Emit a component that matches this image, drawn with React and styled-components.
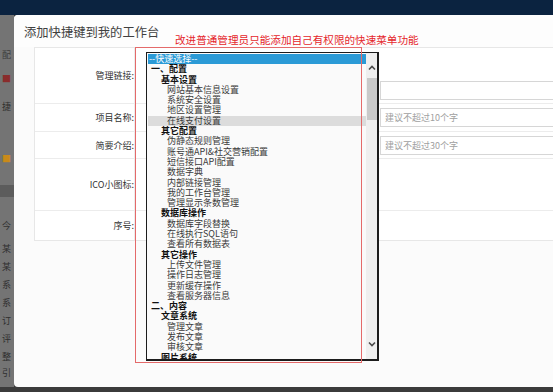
import React from 'react';
import styled, { createGlobalStyle } from 'styled-components';

const GlobalStyle = createGlobalStyle`
  html, body {
    margin: 0;
    padding: 0;
    overflow: hidden;
    background: #3a3a3a;
  }
`;

const FONT = '"Noto Sans CJK SC", "Noto Sans", "Liberation Sans", sans-serif';

const menu = [
  { text: '--快速选择--', level: 0, selected: true },
  { text: '一、配置', level: 0, bold: true },
  { text: '基本设置', level: 1, bold: true },
  { text: '网站基本信息设置', level: 2 },
  { text: '系统安全设置', level: 2 },
  { text: '地区设置管理', level: 2 },
  { text: '在线支付设置', level: 2, hover: true },
  { text: '其它配置', level: 1, bold: true },
  { text: '伪静态规则管理', level: 2 },
  { text: '账号通API&社交营销配置', level: 2 },
  { text: '短信接口API配置', level: 2 },
  { text: '数据字典', level: 2 },
  { text: '内部链接管理', level: 2 },
  { text: '我的工作台管理', level: 2 },
  { text: '管理显示条数管理', level: 2 },
  { text: '数据库操作', level: 1, bold: true },
  { text: '数据库字段替换', level: 2 },
  { text: '在线执行SQL语句', level: 2 },
  { text: '查看所有数据表', level: 2 },
  { text: '其它操作', level: 1, bold: true },
  { text: '上传文件管理', level: 2 },
  { text: '操作日志管理', level: 2 },
  { text: '更新缓存操作', level: 2 },
  { text: '查看服务器信息', level: 2 },
  { text: '二、内容', level: 0, bold: true },
  { text: '文章系统', level: 1, bold: true },
  { text: '管理文章', level: 2 },
  { text: '发布文章', level: 2 },
  { text: '审核文章', level: 2 },
  { text: '图片系统', level: 1, bold: true },
];

const rows = [
  { label: '管理链接:', height: 56, input: 'bottom' },
  { label: '项目名称:', height: 28, input: 'center', hint: '建议不超过10个字' },
  { label: '简要介绍:', height: 27, input: 'center', hint: '建议不超过30个字' },
  { label: 'ICO小图标:', height: 52 },
  { label: '序号:', height: 29 },
];

// faded page behind the dialog, only its right edge shows
const sideBits = [
  { text: '配', top: 34, color: '#3d3d3d' },
  { text: '■', top: 58, color: '#8a2c2c' },
  { text: '捷', top: 86, color: '#2d2d2d' },
  { text: '■', top: 138, color: '#c98a1a' },
  { text: '', top: 170, color: '#555', band: true },
  { text: '今', top: 205, color: '#333' },
  { text: '某', top: 228, color: '#2f2f2f' },
  { text: '某', top: 246, color: '#2f2f2f' },
  { text: '系', top: 264, color: '#2f2f2f' },
  { text: '系', top: 282, color: '#2f2f2f' },
  { text: '订', top: 300, color: '#2f2f2f' },
  { text: '评', top: 318, color: '#2f2f2f' },
  { text: '整', top: 336, color: '#2f2f2f' },
  { text: '引', top: 352, color: '#2f2f2f' },
];

const Page = styled.div`
  position: relative;
  width: 553px;
  height: 392px;
  display: grid;
  grid-template-columns: 14px 1fr;
  grid-template-rows: 15px 372px 5px;
  background: #3a3a3a;
  font-family: ${FONT};
  overflow: hidden;
`;

const TopBar = styled.div`
  grid-column: 1 / 3;
  background: #0b2340;
`;

const SideStrip = styled.div`
  position: relative;
  background: #747474;
  overflow: hidden;
`;

const SideBit = styled.span`
  position: absolute;
  left: 2px;
  top: ${(p) => p.$top}px;
  font-size: 9px;
  line-height: 12px;
  white-space: nowrap;
  color: ${(p) => p.$color};
  ${(p) => p.$band && `left: 0; width: 14px; height: 12px; background: #5c5c5c;`}
`;

const BottomBar = styled.div`
  grid-column: 1 / 3;
  background: #3b3b3b;
`;

const Modal = styled.div`
  background: #fbfbfb;
  border-top-left-radius: 4px;
  border-bottom-left-radius: 4px;
  display: flex;
  flex-direction: column;
  overflow: hidden;
`;

const Title = styled.div`
  height: 32px;
  padding: 2px 0 0 10px;
  box-sizing: border-box;
  display: flex;
  align-items: center;
  font-size: 12.3px;
  color: #404040;
  background: #fdfdfd;
`;

const Table = styled.div`
  margin-left: 20px;
  width: 560px;
  border: 1px solid #e7e7e7;
  border-right: none;
  background: #ffffff;
`;

const Row = styled.div`
  display: grid;
  grid-template-columns: 100px 1fr;
  height: ${(p) => p.$h}px;
  border-bottom: 1px solid #ececec;
  box-sizing: border-box;
  &:last-child {
    border-bottom: none;
  }
`;

const Label = styled.div`
  display: flex;
  align-items: center;
  justify-content: flex-end;
  font-size: 9px;
  color: #333;
  border-right: 1px solid #ececec;
`;

const Cell = styled.div`
  display: flex;
  align-items: ${(p) => (p.$align === 'bottom' ? 'flex-end' : 'center')};
  padding: 0 0 ${(p) => (p.$align === 'bottom' ? 3 : 0)}px 245px;
`;

const TextInput = styled.input`
  width: 300px;
  height: 19px;
  box-sizing: border-box;
  border: 1px solid #d6d6d6;
  background: #fff;
  padding: 0 0 0 4px;
  font-family: ${FONT};
  font-size: 9px;
  outline: none;
  &::placeholder {
    color: #a0a0a0;
  }
`;

const Note = styled.div`
  position: absolute;
  left: 175px;
  top: 33px;
  font-size: 10.6px;
  line-height: 14px;
  color: #e5262b;
  white-space: nowrap;
`;

const NoteFrame = styled.div`
  position: absolute;
  left: 135px;
  top: 47px;
  width: 227px;
  height: 316px;
  box-sizing: border-box;
  border: 1px solid #e46a6a;
  pointer-events: none;
  z-index: 3;
`;

const ListBox = styled.div`
  position: absolute;
  left: 146px;
  top: 52px;
  width: 233px;
  height: 309px;
  box-sizing: border-box;
  border: 1px solid #1c1c1c;
  border-width: 1px 2px 2px 1px;
  background: #fafafa;
  display: flex;
  z-index: 2;
`;

const Options = styled.div`
  flex: 1;
  overflow: hidden;
  padding-top: 1px;
`;

const Option = styled.div`
  height: 10.3px;
  line-height: 10.3px;
  font-size: 9px;
  white-space: nowrap;
  margin-left: 1px;
  padding-left: ${(p) => (p.$selected ? 1 : [3, 13, 19][p.$level])}px;
  font-weight: ${(p) => (p.$bold ? 700 : 400)};
  color: ${(p) => (p.$selected ? '#ffffff' : p.$bold ? '#111' : '#3a3a3a')};
  background: ${(p) => (p.$selected ? '#2b9ad6' : p.$hover ? '#dcdcdc' : 'transparent')};
`;

const Scrollbar = styled.div`
  width: 11px;
  background: #efefef;
  display: flex;
  flex-direction: column;
  align-items: center;
`;

const Arrow = styled.div`
  height: 14px;
  display: flex;
  align-items: center;
  justify-content: center;
  margin-top: ${(p) => (p.$down ? 'auto' : '8px')};
  margin-bottom: ${(p) => (p.$down ? '8px' : '0')};
`;

const Thumb = styled.div`
  width: 10px;
  height: 42px;
  margin-top: 3px;
  background: #c9c9c9;
`;

const Chevron = ({ down }) => (
  <svg width="8" height="6" viewBox="0 0 8 6">
    <path
      d={down ? 'M1 1.5 L4 4.5 L7 1.5' : 'M1 4.5 L4 1.5 L7 4.5'}
      fill="none"
      stroke="#4a4a4a"
      strokeWidth="1.6"
    />
  </svg>
);

export default function App() {
  return (
    <>
      <GlobalStyle />
      <Page>
        <TopBar />
        <SideStrip>
          {sideBits.map((b, i) => (
            <SideBit key={i} $top={b.top} $color={b.color} $band={b.band}>
              {b.text}
            </SideBit>
          ))}
        </SideStrip>
        <Modal>
          <Title>添加快捷键到我的工作台</Title>
          <Table>
            {rows.map((r) => (
              <Row key={r.label} $h={r.height}>
                <Label>{r.label}</Label>
                <Cell $align={r.input}>
                  {r.input && <TextInput placeholder={r.hint || ''} />}
                </Cell>
              </Row>
            ))}
          </Table>
        </Modal>
        <BottomBar />

        <Note>改进普通管理员只能添加自己有权限的快速菜单功能</Note>
        <NoteFrame />
        <ListBox>
          <Options>
            {menu.map((m, i) => (
              <Option
                key={i}
                $level={m.level}
                $bold={m.bold}
                $selected={m.selected}
                $hover={m.hover}
              >
                {m.text}
              </Option>
            ))}
          </Options>
          <Scrollbar>
            <Arrow>
              <Chevron />
            </Arrow>
            <Thumb />
            <Arrow $down>
              <Chevron down />
            </Arrow>
          </Scrollbar>
        </ListBox>
      </Page>
    </>
  );
}
